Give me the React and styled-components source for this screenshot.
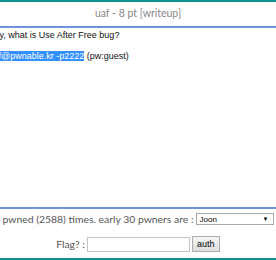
import React from 'react';
import styled, { createGlobalStyle } from 'styled-components';

const Global = createGlobalStyle`
  html, body {
    margin: 0;
    padding: 0;
    background: #fff;
    overflow: hidden;
  }
`;

const Frame = styled.div`
  width: 276px;
  height: 260px;
  box-sizing: border-box;
  border-top: 2px solid #10918f;
  border-bottom: 2px solid #10918f;
  display: flex;
  flex-direction: column;
  overflow: hidden;
`;

const Title = styled.div`
  height: 24px;
  display: flex;
  justify-content: center;
  align-items: center;
  padding-bottom: 3px;
  box-sizing: border-box;
  font-family: Lato, "Liberation Sans", sans-serif;
  font-size: 10.5px;
  color: #888;
`;

const Rule = styled.div`
  height: 2px;
  background: #6f93d6;
  flex-shrink: 0;
`;

const Body = styled.div`
  flex: 1;
  margin-left: -28px;
  padding-top: 2px;
  font-family: "Liberation Sans", Arial, sans-serif;
  font-size: 9px;
  line-height: 10px;
  color: #111;
  white-space: nowrap;
`;

const Line = styled.p`
  margin: 0 0 11px 0;
`;

const Mark = styled.span`
  background: #3390ff;
  color: #fff;
`;

const Footer = styled.div`
  display: flex;
  flex-direction: column;
  align-items: center;
  padding: 4px 0 6px;
  gap: 11px;
  font-family: Lato, "Liberation Sans", sans-serif;
  font-size: 10.4px;
  color: #555;
`;

const Row = styled.div`
  display: flex;
  align-items: center;
  gap: 2px;
  white-space: nowrap;
`;

const Select = styled.div`
  width: 78px;
  height: 12px;
  box-sizing: border-box;
  border: 1px solid #a9a9a9;
  display: flex;
  align-items: center;
  justify-content: space-between;
  padding: 0 4px 0 3px;
  font-family: "Liberation Sans", Arial, sans-serif;
  font-size: 8px;
  color: #000;
`;

const Arrow = styled.span`
  font-size: 6px;
`;

const Input = styled.input`
  width: 103px;
  height: 15px;
  box-sizing: border-box;
  border: 1px solid #c5c5c5;
  padding: 0;
  margin: 0;
`;

const Button = styled.button`
  height: 16px;
  width: 28px;
  padding: 0;
  margin: 0;
  box-sizing: border-box;
  border: 1px solid #adadad;
  background: linear-gradient(#f4f4f4, #dedede);
  font-family: "Liberation Sans", Arial, sans-serif;
  font-size: 9px;
  color: #000;
`;

export default function App() {
  return (
    <>
      <Global />
      <Frame>
        <Title>uaf - 8 pt [writeup]</Title>
        <Rule />
        <Body>
          <Line>Mommy, what is Use After Free bug?</Line>
          <Line>ssh ua<Mark>f@pwnable.kr -p2222</Mark> (pw:guest)</Line>
        </Body>
        <Rule />
        <Footer>
          <Row>
            pwned (2588) times. early 30 pwners are :
            <Select>
              <span>Joon</span>
              <Arrow>▼</Arrow>
            </Select>
          </Row>
          <Row>
            Flag? :
            <Input />
            <Button>auth</Button>
          </Row>
        </Footer>
      </Frame>
    </>
  );
}
